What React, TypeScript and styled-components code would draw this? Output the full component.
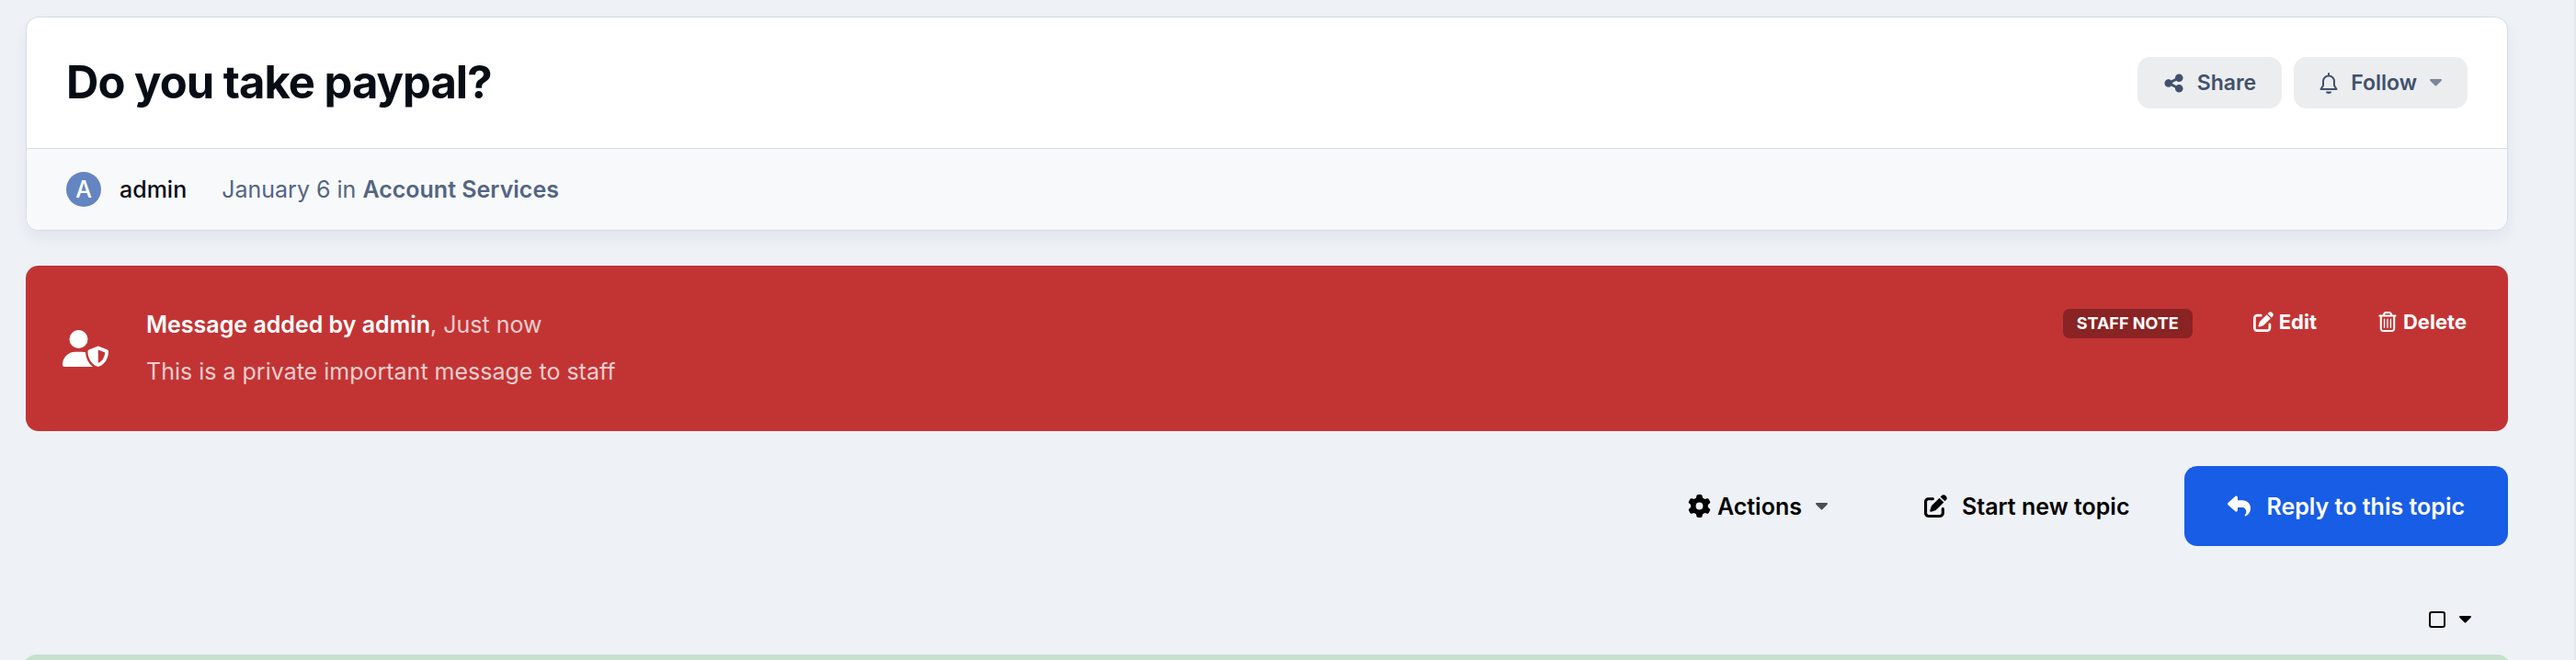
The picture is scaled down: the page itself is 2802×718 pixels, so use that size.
import React from "react";
import styled, { createGlobalStyle } from "styled-components";
import {
  FaGear,
  FaPenToSquare,
  FaRegTrashCan,
  FaReply,
  FaShareNodes,
  FaUserShield,
} from "react-icons/fa6";

const GlobalStyle = createGlobalStyle`
  *, *::before, *::after { box-sizing: border-box; }
  body {
    margin: 0;
    background: #eef1f6;
    font-family: Inter, "Liberation Sans", sans-serif;
    font-size: 25px;
    line-height: 32px;
    color: #080c14;
  }
  h1, h2, p { margin: 0; }
  button { font: inherit; color: inherit; border: 0; background: none; padding: 0; cursor: pointer; }
  a { color: inherit; text-decoration: none; }
  svg { display: block; flex: none; }
`;

const Page = styled.main`
  height: 100vh;
  overflow-y: auto;
  scrollbar-width: none;
  display: flex;
  flex-direction: column;
  padding: 18px 72px 0 28px;
  border-right: 2px solid #e6e7ea;
`;

const TopicCard = styled.section`
  flex: none;
  background: #fff;
  border: 1px solid #d5dce8;
  border-radius: 14px;
  box-shadow: 0 8px 16px rgba(30, 45, 80, 0.06);
  overflow: hidden;
`;

const TopicHeader = styled.header`
  display: flex;
  align-items: center;
  justify-content: space-between;
  gap: 24px;
  padding: 39px 43px;
`;

const TopicTitle = styled.h1`
  font-size: 49px;
  line-height: 64px;
  font-weight: 700;
  letter-spacing: -1px;
`;

const ButtonGroup = styled.div`
  display: flex;
  gap: 13px;
`;

const SoftButton = styled.button`
  display: flex;
  align-items: center;
  gap: 14px;
  height: 56px;
  padding: 0 28px;
  border-radius: 14px;
  background: #ecedef;
  color: #40516e;
  font-size: 23px;
  font-weight: 600;
`;

const TopicMeta = styled.div`
  display: flex;
  align-items: center;
  height: 89px;
  padding: 0 43px;
  border-top: 1px solid #d5dce8;
  background: #f8f9fb;
`;

const Avatar = styled.span`
  display: grid;
  place-items: center;
  width: 38px;
  height: 38px;
  margin-right: 20px;
  border-radius: 50%;
  background: #6485c1;
  color: #fff;
  font-weight: 500;
`;

const Author = styled.a`
  margin-right: 38px;
  font-weight: 500;
`;

const Posted = styled.p`
  color: #536583;
  a { font-weight: 600; }
`;

const StaffNote = styled.section`
  flex: none;
  display: flex;
  min-height: 180px;
  margin-top: 38px;
  padding: 47px 45px 40px 40px;
  border-radius: 14px;
  background: #c23434;
  color: #fff;
`;

const NoteIcon = styled.div`
  width: 91px;
  padding-top: 18px;
`;

const NoteBody = styled.div`
  flex: 1;
  display: grid;
  align-content: start;
  gap: 19px;
  padding-top: 1px;
  color: #f1cdcd;
  h2 { display: inline; font-size: 25px; line-height: 32px; font-weight: 600; color: #fff; }
`;

const NoteTools = styled.div`
  display: flex;
  align-items: flex-start;
`;

const Badge = styled.span`
  margin-right: 66px;
  padding: 0 15px;
  border-radius: 7px;
  background: #892324;
  font-size: 18px;
  line-height: 32px;
  font-weight: 700;
`;

const NoteAction = styled.button`
  display: flex;
  align-items: center;
  gap: 6px;
  font-size: 22px;
  line-height: 28px;
  font-weight: 700;
  & + & { margin-left: 66px; }
`;

const Toolbar = styled.div`
  flex: none;
  display: flex;
  align-items: center;
  justify-content: flex-end;
  margin-top: 38px;
`;

const PlainButton = styled.button<{ $gap: number }>`
  display: flex;
  align-items: center;
  gap: ${(p) => p.$gap}px;
  margin-right: 60px;
  color: #000;
  font-weight: 600;
  & + & { margin-left: 45px; }
`;

const ButtonLabel = styled.span`
  margin-right: 8px;
`;

const PrimaryButton = styled.button`
  display: flex;
  align-items: center;
  gap: 17px;
  height: 87px;
  padding: 0 47px;
  border-radius: 14px;
  background: #185de5;
  color: #fff;
  font-weight: 600;
`;

const SelectRow = styled.div`
  flex: none;
  display: flex;
  align-items: center;
  justify-content: flex-end;
  gap: 15px;
  height: 24px;
  margin: 68px 40px 26px 0;
`;

const SelectAll = styled.input`
  appearance: none;
  width: 18px;
  height: 18px;
  margin: 0;
  border: 2px solid #000;
  border-radius: 3px;
`;

const Post = styled.article`
  flex: 1 0 80px;
  margin: 0 -4px;
  border-radius: 16px;
  background: #c7e1ce;
`;

const BellIcon = () => (
  <svg width="20" height="23" viewBox="0 0 20 23" fill="none" stroke="currentColor" strokeWidth="2" aria-hidden="true">
    <path d="M10 1v2M1.5 18h17L16 14V9.500A6 6 0 0 0 4 9.500V14z" strokeLinejoin="round" strokeLinecap="round" />
    <path d="M7 20.500h6a3 2.500 0 0 1-6 0z" fill="currentColor" stroke="none" />
  </svg>
);

const Caret = ({ color }: { color: string }) => (
  <svg width="13" height="8" viewBox="0 0 13 8" fill={color} aria-hidden="true">
    <path d="M1 0h11a1 1 0 0 1 .7 1.700L7.200 7.200a1 1 0 0 1-1.400 0L.3 1.700A1 1 0 0 1 1 0z" />
  </svg>
);

export default function App() {
  return (
    <>
      <GlobalStyle />
      <Page>
        <TopicCard>
          <TopicHeader>
            <TopicTitle>Do you take paypal?</TopicTitle>
            <ButtonGroup>
              <SoftButton type="button">
                <FaShareNodes size={23} />
                Share
              </SoftButton>
              <SoftButton type="button">
                <BellIcon />
                Follow
                <Caret color="#7b869a" />
              </SoftButton>
            </ButtonGroup>
          </TopicHeader>
          <TopicMeta>
            <Avatar>A</Avatar>
            <Author href="#admin">admin</Author>
            <Posted>
              January 6 in <a href="#account-services">Account Services</a>
            </Posted>
          </TopicMeta>
        </TopicCard>

        <StaffNote>
          <NoteIcon>
            <FaUserShield size={50} />
          </NoteIcon>
          <NoteBody>
            <div>
              <h2>Message added by admin</h2>, Just now
            </div>
            <p>This is a private important message to staff</p>
          </NoteBody>
          <NoteTools>
            <Badge>STAFF NOTE</Badge>
            <NoteAction type="button">
              <FaPenToSquare size={22} />
              Edit
            </NoteAction>
            <NoteAction type="button">
              <FaRegTrashCan size={22} />
              Delete
            </NoteAction>
          </NoteTools>
        </StaffNote>

        <Toolbar>
          <PlainButton type="button" $gap={7}>
            <FaGear size={25} />
            <ButtonLabel>Actions</ButtonLabel>
            <Caret color="#4c4e51" />
          </PlainButton>
          <PlainButton type="button" $gap={16}>
            <FaPenToSquare size={25} />
            Start new topic
          </PlainButton>
          <PrimaryButton type="button">
            <FaReply size={25} />
            Reply to this topic
          </PrimaryButton>
        </Toolbar>

        <SelectRow>
          <SelectAll type="checkbox" aria-label="Select all posts" />
          <button type="button" aria-label="Selection options">
            <Caret color="#000" />
          </button>
        </SelectRow>

        <Post />
      </Page>
    </>
  );
}
